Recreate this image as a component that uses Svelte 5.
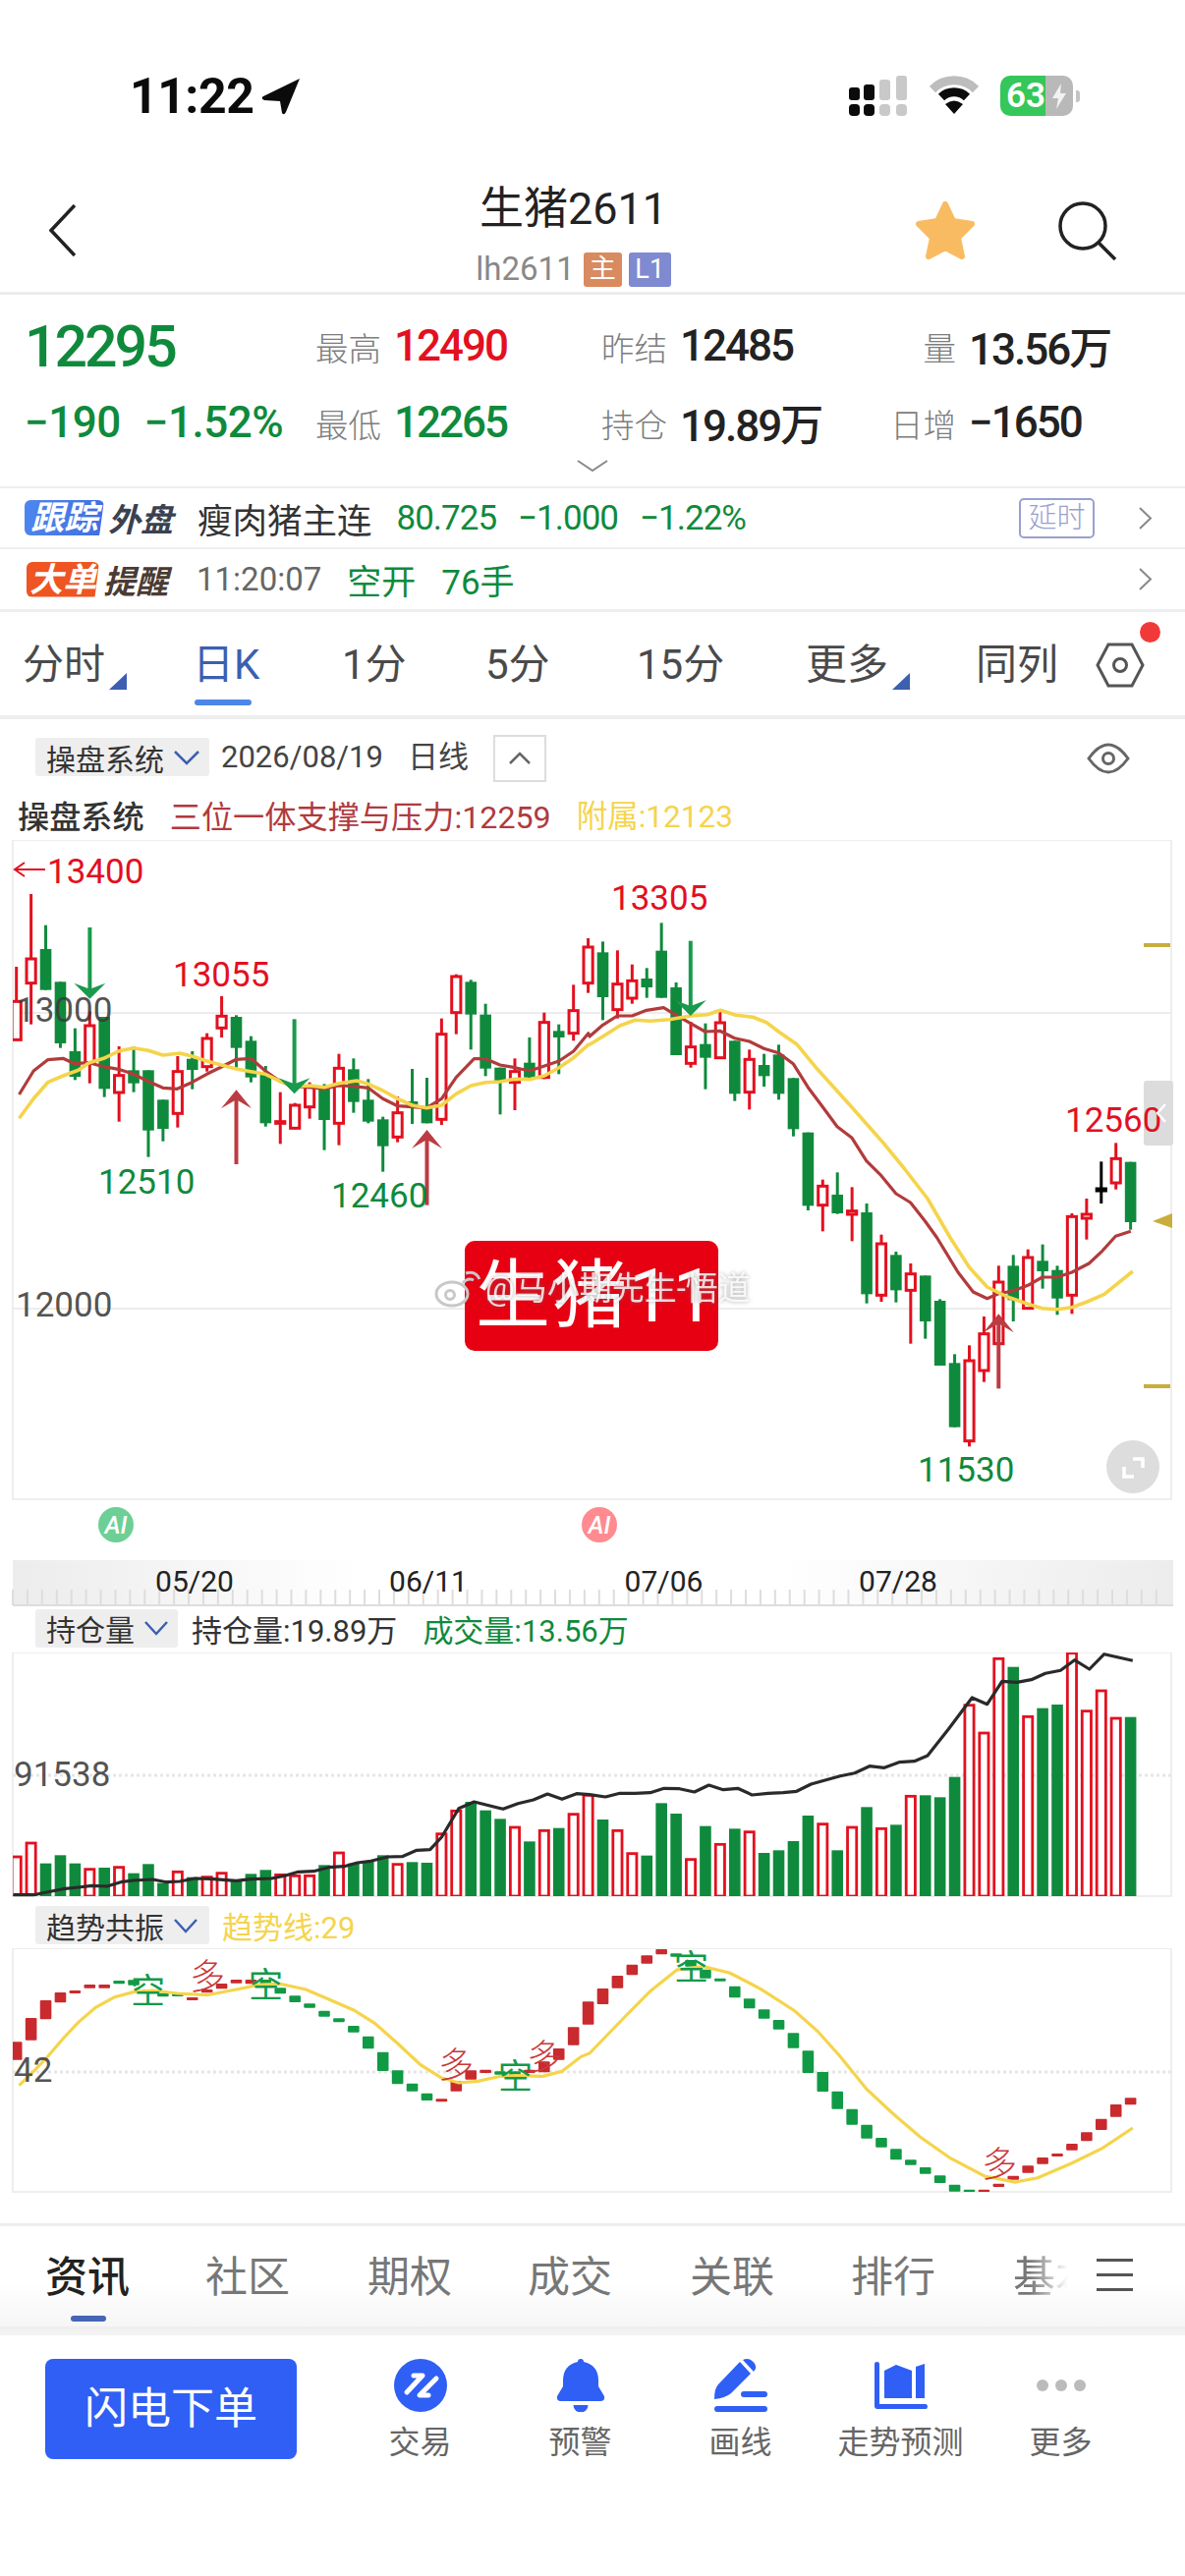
<script>
  // all chart numbers were read off the reference crops, so they stay in "crop" units here
  const X = (i) => 16.7 + 14.92 * i;
  const Y = (z) => 860 + z / 3;
  const Yv = (z) => 1630 + z / 3;
  const Yt = (z) => 1930 + z / 3;

  const candles = [
    [372,478,595,595,'r'],[150,348,422,548,'r'],[245,318,443,443,'g'],[418,418,606,620,'g'],
    [560,630,708,718,'g'],[508,552,665,728,'r'],[525,525,745,770,'g'],[615,704,756,845,'r'],
    [615,688,728,755,'g'],[688,688,872,953,'g'],[778,778,867,905,'g'],[645,692,820,863,'r'],
    [630,653,687,746,'g'],[575,591,677,692,'r'],[462,523,559,588,'r'],[520,525,620,680,'g'],
    [584,598,710,725,'g'],[675,702,850,860,'g'],[755,845,850,913,'r'],[788,795,865,868,'r'],
    [725,740,800,836,'r'],[730,745,840,932,'g'],[638,682,850,917,'r'],[652,685,785,818,'g'],
    [715,778,845,850,'g'],[830,838,920,998,'g'],[768,818,892,908,'r'],[684,783,800,852,'g'],
    [711,800,850,850,'g'],[530,578,838,855,'r'],[395,402,512,578,'r'],[412,418,518,625,'g'],
    [485,518,683,706,'g'],[680,680,722,823,'g'],[652,692,725,810,'r'],[588,665,710,715,'g'],
    [512,542,710,715,'r'],[548,568,588,700,'g'],[427,506,575,598,'r'],[285,312,422,452,'r'],
    [295,328,465,535,'g'],[322,425,503,530,'r'],[365,415,468,485,'r'],[376,408,435,467,'g'],
    [238,323,467,467,'g'],[420,435,642,642,'g'],[540,617,667,680,'r'],[545,608,650,746,'g'],
    [502,543,650,650,'r'],[598,598,760,782,'g'],[625,655,755,808,'r'],[638,672,706,738,'g'],
    [610,640,760,778,'g'],[712,712,868,890,'g'],[878,878,1102,1116,'g'],[1022,1042,1100,1180,'r'],
    [1000,1068,1125,1127,'g'],[1045,1118,1128,1210,'r'],[1095,1122,1372,1400,'g'],[1190,1218,1375,1395,'r'],
    [1242,1252,1360,1397,'g'],[1278,1310,1360,1523,'r'],[1315,1315,1455,1508,'g'],[1387,1392,1590,1590,'g'],
    [1555,1582,1778,1778,'g'],[1528,1575,1820,1837,'r'],[1440,1493,1605,1640,'r'],[1285,1335,1523,1523,'r'],
    [1252,1285,1390,1455,'g'],[1235,1260,1415,1415,'r'],[1220,1270,1302,1355,'g'],[1285,1298,1385,1435,'g'],
    [1125,1135,1375,1432,'r'],[1080,1128,1140,1205,'r'],[967,1050,1056,1095,'k'],[910,958,1032,1052,'r'],
    [968,968,1152,1175,'g']
  ];

  const vols = [
    [780,'r'],[738,'r'],[800,'g'],[775,'g'],[800,'g'],[818,'r'],[813,'g'],[812,'r'],[830,'g'],[802,'g'],
    [860,'g'],[826,'r'],[842,'g'],[842,'r'],[830,'r'],[855,'g'],[832,'g'],[820,'g'],[835,'r'],[838,'r'],
    [838,'r'],[805,'g'],[768,'r'],[800,'g'],[795,'g'],[775,'g'],[803,'r'],[796,'g'],[798,'g'],[710,'r'],
    [640,'r'],[612,'g'],[638,'g'],[664,'g'],[690,'r'],[733,'g'],[700,'r'],[692,'g'],[650,'r'],[592,'r'],
    [666,'g'],[700,'r'],[770,'r'],[776,'g'],[616,'g'],[648,'g'],[788,'r'],[686,'g'],[742,'r'],[694,'g'],
    [704,'r'],[768,'g'],[760,'g'],[732,'g'],[654,'g'],[680,'r'],[760,'g'],[690,'r'],[628,'g'],[694,'r'],
    [682,'g'],[595,'r'],[592,'g'],[598,'g'],[536,'g'],[317,'r'],[402,'r'],[175,'r'],[200,'g'],[352,'r'],
    [326,'g'],[315,'g'],[158,'r'],[335,'r'],[273,'r'],[357,'r'],[353,'g']
  ];

  const trend = [
    [445,500,'r'],[372,440,'r'],[318,376,'r'],[294,325,'r'],[288,297,'r'],[270,281,'r'],[270,281,'r'],[258,268,'g'],
    [256,272,'g'],[285,295,'g'],[296,307,'g'],[298,306,'g'],[309,318,'r'],[285,295,'r'],[267,283,'r'],[255,266,'r'],
    [255,268,'r'],[255,278,'g'],[280,298,'g'],[304,324,'g'],[328,341,'g'],[350,368,'g'],[373,385,'g'],[396,416,'g'],
    [428,466,'g'],[476,534,'g'],[532,574,'g'],[572,596,'g'],[602,624,'g'],[619,628,'r'],[565,596,'r'],[532,560,'r'],
    [530,540,'r'],[535,545,'g'],[535,550,'g'],[530,540,'r'],[505,538,'r'],[465,500,'r'],[400,455,'r'],[322,392,'r'],
    [282,330,'r'],[243,281,'r'],[209,241,'r'],[181,206,'r'],[162,178,'r'],[175,185,'g'],[195,215,'g'],[224,251,'g'],
    [251,260,'g'],[275,310,'g'],[313,343,'g'],[346,374,'g'],[378,407,'g'],[418,464,'g'],[472,540,'g'],[537,597,'g'],
    [596,650,'g'],[650,698,'g'],[698,740,'g'],[738,767,'g'],[772,805,'g'],[805,821,'g'],[828,848,'g'],[853,876,'g'],
    [881,902,'g'],[896,903,'g'],[896,903,'r'],[878,888,'r'],[854,866,'r'],[823,845,'r'],[798,818,'r'],[786,795,'r'],
    [756,776,'r'],[721,748,'r'],[680,714,'r'],[636,674,'r'],[616,637,'r']
  ];

  const left = (a) => a.map(([x, y]) => [x / 2.57, y]);
  const right = (a) => a.map(([x, y]) => [600 + x / 2.587, y]);
  const path = (pts, fy) => pts.map(([x, y]) => `${x.toFixed(1)},${fy(y).toFixed(1)}`).join(' ');

  const maRed = path([
    ...left([[50,762],[88,690],[125,656],[165,652],[195,668],[233,665],[271,677],[310,685],[349,700],[388,722],[426,742],[464,745],[502,725],[541,700],[579,678],[618,655],[656,652],[694,690],[733,722],[771,738],[810,740],[848,745],[886,735],[925,737],[963,742],[1001,775],[1040,797],[1078,800],[1116,803],[1155,775],[1193,710],[1240,653],[1270,653],[1308,672],[1347,680],[1385,690],[1424,675],[1462,660],[1500,630],[1539,575]]),
    ...right([[0,585],[35,550],[73,522],[112,522],[150,505],[195,497],[228,520],[266,545],[304,570],[343,568],[382,590],[421,600],[459,622],[498,635],[536,668],[575,740],[614,800],[652,860],[691,895],[729,965],[768,1010],[807,1065],[845,1092],[884,1150],[915,1200],[970,1305],[1010,1365],[1047,1385],[1077,1370],[1115,1362],[1154,1345],[1192,1320],[1231,1320],[1270,1305],[1315,1278],[1350,1240],[1385,1195],[1425,1180]])
  ], Y);

  const maYellow = path([
    ...left([[50,835],[88,775],[125,725],[165,705],[205,688],[233,665],[271,652],[310,630],[349,620],[388,628],[426,642],[470,636],[502,645],[541,660],[579,672],[618,684],[656,692],[694,700],[733,722],[771,738],[810,735],[848,740],[886,728],[933,720],[963,730],[1001,750],[1040,775],[1078,795],[1116,803],[1155,795],[1193,760],[1232,735],[1270,725],[1308,723],[1347,715],[1385,716],[1424,705],[1462,680],[1500,650],[1539,610]]),
    ...right([[0,610],[35,585],[80,552],[120,535],[160,538],[210,533],[266,522],[310,518],[345,505],[385,520],[430,526],[466,542],[500,572],[545,608],[600,685],[690,800],[770,905],[830,990],[890,1080],[950,1200],[1000,1290],[1047,1350],[1100,1380],[1150,1400],[1192,1415],[1232,1418],[1270,1412],[1310,1395],[1355,1372],[1430,1302]])
  ], Y);

  const oiLine = path([
    ...left([[35,896],[88,896],[125,887],[165,878],[205,873],[240,868],[280,870],[320,856],[349,852],[400,849],[435,857],[470,855],[510,846],[550,847],[618,853],[656,848],[710,846],[745,838],[780,826],[820,824],[860,812],[900,809],[935,798],[970,793],[1015,780],[1052,779],[1090,760],[1125,758],[1155,720],[1200,632],[1240,612],[1316,634],[1355,617],[1395,606],[1432,588],[1470,604],[1508,587]]),
    ...right([[0,590],[42,597],[80,586],[120,586],[160,584],[196,571],[237,572],[276,582],[314,561],[352,575],[390,571],[428,591],[470,586],[510,584],[545,580],[583,558],[620,546],[660,533],[698,524],[737,503],[776,508],[815,491],[855,488],[890,471],[945,390],[1007,294],[1047,314],[1086,244],[1125,247],[1163,239],[1200,220],[1240,211],[1277,179],[1316,207],[1355,161],[1430,181]])
  ], Yv);

  const trendLine = path([
    ...left([[50,578],[88,535],[125,490],[165,435],[205,385],[250,340],[300,308],[349,293],[400,288],[464,297],[541,302],[618,285],[680,270],[733,268],[800,285],[860,315],[925,348],[980,388],[1040,450],[1100,515],[1155,555],[1200,570],[1250,565],[1310,550],[1350,548],[1420,550],[1470,535],[1520,490]]),
    ...right([[0,480],[50,420],[100,360],[160,290],[230,225],[300,215],[370,235],[450,283],[540,350],[600,412],[660,490],[730,590],[800,665],[870,735],[950,800],[1040,855],[1120,873],[1180,860],[1270,815],[1350,770],[1430,708]])
  ], Yt);

  const upArrows = [
    [240.5, Y(748), Y(975)],
    [434.5, Y(870), Y(1100)],
    [1016.3, Y(1432), Y(1660)]
  ];
  const downArrows = [
    [91.4, Y(252), Y(470)],
    [299.6, Y(532), Y(760)],
    [702.8, Y(293), Y(522)]
  ];

  const upHead = (x, t) => `${x},${t} ${x + 15.5},${t + 19} ${x},${t + 10} ${x - 15.5},${t + 19}`;
  const downHead = (x, t) => `${x},${t} ${x + 16},${t - 16} ${x},${t - 10} ${x - 16},${t - 16}`;

  const tickXs = Array.from({ length: 79 }, (_, i) => 13 + 14.92 * i);

  const periods = ['分时', '日K', '1分', '5分', '15分', '更多', '同列'];
  const infoTabs = ['资讯', '社区', '期权', '成交', '关联', '排行'];
  const actions = ['交易', '预警', '画线', '走势预测', '更多'];
  const dates = [['05/20', 198], ['06/11', 436], ['07/06', 675.5], ['07/28', 914]];
</script>

<div class="page">
  <div class="status">
    <div class="clock">
      <span>11:22</span>
      <svg width="40" height="38" viewBox="0 0 40 38">
        <path class="black" d="M39 1 L2 19 Q-1 21 3 23 L19 24 L21 36 Q23 39 25 35 Z" />
      </svg>
    </div>
    <div class="status-right">
      <svg width="60" height="42" viewBox="0 0 60 42">
        <rect class="black" x="0" y="12" width="11" height="13" rx="3" />
        <rect class="black" x="15" y="9" width="11" height="16" rx="3" />
        <rect class="dim" x="31" y="4" width="11" height="21" rx="3" />
        <rect class="dim" x="48" y="0" width="11" height="25" rx="3" />
        <rect class="black" x="0" y="29" width="11" height="12" rx="4" />
        <rect class="black" x="15" y="29" width="11" height="12" rx="4" />
        <rect class="dim" x="31" y="29" width="11" height="12" rx="4" />
        <rect class="dim" x="48" y="29" width="11" height="12" rx="4" />
      </svg>
      <svg width="50" height="40" viewBox="0 0 50 40">
        <path class="wifi-out" d="M3 14 A31 31 0 0 1 47 14" />
        <path class="wifi-in" d="M12 22 A19 19 0 0 1 38 22" />
        <path class="black" d="M25 39 L16 29 Q25 22 34 29 Z" />
      </svg>
      <div class="battery">
        <span class="bat-fill">63</span>
        <span class="bat-rest">
          <svg width="18" height="28" viewBox="0 0 18 28"><path class="bolt" d="M11 1 L2 16 H8 L6 27 L16 11 H10 Z" /></svg>
        </span>
        <span class="bat-nub"></span>
      </div>
    </div>
  </div>

  <div class="nav">
    <svg class="back" width="27" height="53" viewBox="0 0 27 53"><path d="M26 1 L2 26.5 L26 52" /></svg>
    <div class="title-block">
      <div class="title">生猪2611</div>
      <div class="sub">
        <span class="code">lh2611</span>
        <span class="tag tag-main">主</span>
        <span class="tag tag-l1">L1</span>
      </div>
    </div>
    <svg class="star" width="62" height="60" viewBox="0 0 62 60">
      <path d="M31 3 L39 20 L58 23 L44 37 L48 56 L31 47 L14 56 L18 37 L4 23 L23 20 Z" />
    </svg>
    <svg class="search" width="60" height="60" viewBox="0 0 60 60">
      <circle cx="25" cy="25" r="23" />
      <path d="M41 42 L58 59" />
    </svg>
  </div>

  <div class="quote">
    <div class="q-row">
      <div class="cell"><span class="price down">12295</span></div>
      <div class="cell"><span class="lbl">最高</span><span class="val up">12490</span></div>
      <div class="cell"><span class="lbl">昨结</span><span class="val">12485</span></div>
      <div class="cell last"><span class="lbl">量</span><span class="val">13.56万</span></div>
    </div>
    <div class="q-row">
      <div class="cell wide"><span class="val down">−190</span><span class="val down">−1.52%</span></div>
      <div class="cell"><span class="lbl">最低</span><span class="val down">12265</span></div>
      <div class="cell"><span class="lbl">持仓</span><span class="val">19.89万</span></div>
      <div class="cell last"><span class="lbl">日增</span><span class="val">−1650</span></div>
    </div>
    <svg class="more-down" width="32" height="12" viewBox="0 0 32 12"><path d="M1 1 L16 11 L31 1" /></svg>
  </div>

  <div class="strip">
    <span class="badge badge-blue">跟踪</span><span class="badge-word">外盘</span>
    <span class="name">瘦肉猪主连</span>
    <span class="num down">80.725</span>
    <span class="num down">−1.000</span>
    <span class="num down">−1.22%</span>
    <span class="delay">延时</span>
    <svg class="go" width="15" height="23" viewBox="0 0 15 23"><path d="M2 1 L13 11.5 L2 22" /></svg>
  </div>
  <div class="strip strip-2">
    <span class="badge badge-orange">大单</span><span class="badge-word brown">提醒</span>
    <span class="time">11:20:07</span>
    <span class="num2 down">空开</span>
    <span class="num2 down">76手</span>
    <svg class="go" width="15" height="23" viewBox="0 0 15 23"><path d="M2 1 L13 11.5 L2 22" /></svg>
  </div>

  <div class="periods">
    {#each periods as p, i}
      <div class="period" class:active={i === 1}>
        {p}
        {#if i === 0 || i === 5}<span class="corner"></span>{/if}
      </div>
    {/each}
    <div class="gear">
      <svg width="50" height="46" viewBox="0 0 50 46">
        <path d="M13 2 H37 L48 23 L37 44 H13 L2 23 Z" />
        <circle cx="25" cy="23" r="6.5" />
      </svg>
      <span class="dot"></span>
    </div>
  </div>

  <div class="ind-bar">
    <div class="picker">操盘系统<svg width="28" height="16" viewBox="0 0 28 16"><path d="M2 2 L14 14 L26 2" /></svg></div>
    <span class="date">2026/08/19</span>
    <span class="date day">日线</span>
    <div class="collapse"><svg width="24" height="14" viewBox="0 0 24 14"><path d="M2 12 L12 2 L22 12" /></svg></div>
    <svg class="eye" width="44" height="32" viewBox="0 0 44 32">
      <path d="M2 16 Q22 -12 42 16 Q22 44 2 16 Z" />
      <circle cx="22" cy="16" r="5.5" />
    </svg>
  </div>
  <div class="legend">
    <span class="ink">操盘系统</span>
    <span class="ma-red">三位一体支撑与压力:12259</span>
    <span class="ma-yellow">附属:12123</span>
  </div>

  <svg class="chart" width="1206" height="782" viewBox="0 855 1206 782">
    <defs>
      <clipPath id="mainClip"><rect x="13" y="855" width="1179" height="671" /></clipPath>
      <clipPath id="volClip"><rect x="13" y="1682" width="1179" height="248" /></clipPath>
      <clipPath id="trendClip"><rect x="13" y="1983" width="1179" height="248" /></clipPath>
      <linearGradient id="axisFill" x1="0" x2="1" y1="0" y2="0">
        <stop offset="0" stop-color="#ececec" />
        <stop offset="0.3" stop-color="#ffffff" />
        <stop offset="0.66" stop-color="#ffffff" />
        <stop offset="1" stop-color="#ececec" />
      </linearGradient>
    </defs>

    <rect class="frame" x="13" y="855" width="1179" height="671" />
    <line class="grid" x1="13" x2="1192" y1="1031" y2="1031" />
    <line class="grid" x1="13" x2="1192" y1="1332" y2="1332" />

    <g clip-path="url(#mainClip)">
      {#each candles as [hi, top, bot, lo, t], i}
        <line class="wick {t}" x1={X(i)} x2={X(i)} y1={Y(hi)} y2={Y(lo)} />
        {#if t === 'g'}
          <rect class="solid" x={X(i) - 5.8} y={Y(top)} width="11.6" height={(bot - top) / 3} />
        {:else}
          <rect class="hollow {t}" x={X(i) - 4.6} y={Y(top)} width="9.2" height={(bot - top) / 3} />
        {/if}
      {/each}
    </g>

    <polyline class="ma red-line" points={maRed} />
    <polyline class="ma yellow-line" points={maYellow} />

    {#each downArrows as [x, tail, tip]}
      <line class="arrow-g" x1={x} x2={x} y1={tail} y2={tip - 4} />
      <polygon class="head-g" points={downHead(x, tip)} />
    {/each}
    {#each upArrows as [x, tip, tail]}
      <line class="arrow-r" x1={x} x2={x} y1={tip + 4} y2={tail} />
      <polygon class="head-r" points={upHead(x, tip)} />
    {/each}

    <rect class="side-tab" x="1164" y="1100" width="30" height="66" rx="3" />

    <path class="mark-arrow" d="M46 885 H15 M25 878 L15 885 L25 892" />
    <text class="px up-t" x="48" y="899">13400</text>
    <text class="px up-t" x="176" y="1004">13055</text>
    <text class="px up-t" x="622" y="926">13305</text>
    <text class="px up-t" x="1084" y="1152">12560</text>
    <text class="px down-t" x="100" y="1215">12510</text>
    <text class="px down-t" x="337" y="1229">12460</text>
    <text class="px down-t" x="934" y="1508">11530</text>
    <text class="px axis-t" x="16" y="1040">13000</text>
    <text class="px axis-t" x="16" y="1340">12000</text>

    <rect class="gold" x="1164" y="960" width="27" height="4" />
    <rect class="gold" x="1164" y="1409" width="27" height="4" />
    <polygon class="gold" points="1173,1243 1193,1235 1193,1250" />

    <path class="side-chev" d="M1186 1124 L1178 1133 L1186 1142" />

    <rect class="stamp" x="473" y="1263" width="258" height="112" rx="10" />
    <text class="stamp-t" x="484" y="1345">生猪11</text>

    <g class="weibo">
      <ellipse cx="460" cy="1317" rx="16" ry="12" />
      <circle cx="458" cy="1318" r="4.5" />
      <path d="M471 1306 Q476 1300 482 1303 M474 1296 Q484 1293 488 1302" />
    </g>
    <text class="mark" x="494" y="1323">@马小期先生-悟道</text>

    <circle class="round-btn" cx="1153" cy="1493" r="27" />
    <path class="round-icon" d="M1153 1485 H1163 V1494 M1144 1493 V1503 H1154" />

    <circle class="ai-g" cx="118" cy="1552" r="18" />
    <text class="ai-t" x="118" y="1561">AI</text>
    <circle class="ai-r" cx="610" cy="1552" r="18" />
    <text class="ai-t" x="610" y="1561">AI</text>

    <rect x="13" y="1588" width="1181" height="47" fill="url(#axisFill)" />
    {#each tickXs as x}
      <line class="tick" x1={x} x2={x} y1="1618" y2="1634" />
    {/each}
    <line class="tick" x1="13" x2="1194" y1="1634" y2="1634" />
    {#each dates as [d, x]}
      <text class="date-t" {x} y="1620">{d}</text>
    {/each}
  </svg>

  <div class="sub-bar">
    <div class="picker small">持仓量<svg width="26" height="16" viewBox="0 0 26 16"><path d="M2 2 L13 14 L24 2" /></svg></div>
    <span class="sub-ink">持仓量:19.89万</span>
    <span class="sub-green">成交量:13.56万</span>
  </div>

  <svg class="chart" width="1206" height="250" viewBox="0 1682 1206 250">
    <rect class="frame" x="13" y="1682" width="1179" height="248" />
    <line class="dots" x1="13" x2="1192" y1="1807" y2="1807" />
    <g clip-path="url(#volClip)">
      {#each vols as [top, t], i}
        {#if t === 'g'}
          <rect class="solid" x={X(i) - 5.8} y={Yv(top)} width="11.6" height={(900 - top) / 3} />
        {:else}
          <rect class="vol-hollow" x={X(i) - 4.6} y={Yv(top)} width="9.2" height={(900 - top) / 3} />
        {/if}
      {/each}
    </g>
    <polyline class="oi" points={oiLine} />
    <text class="px axis-t" x="14" y="1818">91538</text>
  </svg>

  <div class="sub-bar trend-bar">
    <div class="picker wide">趋势共振<svg width="26" height="16" viewBox="0 0 26 16"><path d="M2 2 L13 14 L24 2" /></svg></div>
    <span class="sub-yellow">趋势线:29</span>
  </div>

  <svg class="chart" width="1206" height="250" viewBox="0 1983 1206 250">
    <rect class="frame" x="13" y="1983" width="1179" height="248" />
    <line class="dots" x1="13" x2="1192" y1="2109" y2="2109" />
    <g clip-path="url(#trendClip)">
      {#each trend as [top, bot, t], i}
        <rect class={t === 'g' ? 'tb-g' : 'tb-r'} x={X(i) - 5.8} y={Yt(top)} width="11.6" height={(bot - top) / 3} rx="1" />
      {/each}
    </g>
    <polyline class="trend-line" points={trendLine} />
    <text class="sig-g" x="133" y="2039">空</text>
    <text class="sig-g" x="253" y="2033">空</text>
    <text class="sig-g" x="507" y="2126">空</text>
    <text class="sig-g" x="686" y="2015">空</text>
    <text class="sig-r" x="193" y="2025">多</text>
    <text class="sig-r" x="446" y="2115">多</text>
    <text class="sig-r" x="536" y="2107">多</text>
    <text class="sig-r" x="999" y="2216">多</text>
    <text class="px axis-t" x="14" y="2119">42</text>
  </svg>

  <div class="info-tabs">
    {#each infoTabs as t, i}
      <div class="info-tab" class:on={i === 0}>{t}</div>
    {/each}
    <div class="info-tab fade">基本</div>
    <div class="burger"><i></i><i></i><i></i></div>
  </div>
  <div class="info-shadow"></div>

  <div class="bottom">
    <div class="order">闪电下单</div>
    <div class="actions">
      {#each actions as a, i}
        <div class="action">
          <svg width="54" height="54" viewBox="0 0 54 54">
            {#if i === 0}
              <ellipse class="blue" cx="27" cy="27" rx="27" ry="27" />
              <path class="z" d="M20 17 H29 L13 34 M43 20 L26 37 H35" />
            {:else if i === 1}
              <path class="blue" d="M27 0 a3 3 0 0 1 3 3 C40 5 45 12 45 22 V28 L51 38 Q52 43 47 43 H7 Q2 43 3 38 L9 28 V22 C9 12 14 5 24 3 a3 3 0 0 1 3 -3 Z" />
              <path class="blue" d="M19.5 47 H34.5 A7.5 7.5 0 0 1 19.5 47 Z" />
            {:else if i === 2}
              <path class="blue" d="M0 41 Q0 30 4 26 L26 3 L37 15 L17 35 Q11 40 0 41 Z" />
              <path class="blue" d="M29 1 Q33 -1 37 1 Q43 5 42 10 L40 13 Z" />
              <rect class="blue" x="27" y="33" width="27" height="6" rx="3" />
              <rect class="blue" x="0" y="48" width="54" height="6" rx="3" />
            {:else if i === 3}
              <path class="blue" d="M0 5 Q0 3 2.5 3 Q5 3 5 5 V46 H52 Q54 46 54 48.5 Q54 51 52 51 H3 Q0 51 0 48 Z" />
              <path class="blue" d="M10 12 L22 6 L38 12 V40 H10 Z" />
              <path class="blue" d="M42 8 L51 5 V40 H42 Z" />
            {:else}
              <circle class="grey" cx="8" cy="27" r="6" />
              <circle class="grey" cx="27" cy="27" r="6" />
              <circle class="grey" cx="46" cy="27" r="6" />
            {/if}
          </svg>
          <span>{a}</span>
        </div>
      {/each}
    </div>
  </div>
</div>

<style>
  :global(body) {
    margin: 0;
    background: #fff;
  }

  .page {
    width: 1206px;
    height: 2622px;
    overflow: hidden;
    background: #fff;
    font-family: Roboto, 'Noto Sans CJK SC', sans-serif;
    color: #222;
  }

  svg { display: block; }
  .chart text { font-family: Roboto, 'Noto Sans CJK SC', sans-serif; }

  /* status bar */
  .status {
    height: 130px;
    box-sizing: border-box;
    padding: 77px 114px 0 132px;
    display: flex;
    justify-content: space-between;
    align-items: flex-start;
  }
  .clock {
    display: flex;
    align-items: center;
    gap: 8px;
    font-size: 50px;
    line-height: 42px;
    font-weight: 700;
    letter-spacing: -0.5px;
    color: #0b0b0b;
  }
  .status-right {
    display: flex;
    align-items: flex-start;
    gap: 22px;
  }
  .black { fill: #0b0b0b; }
  .dim { fill: #c9c9c9; }
  .wifi-out, .wifi-in { fill: none; stroke-width: 9px; }
  .wifi-out { stroke: #bdbdbd; }
  .wifi-in { stroke: #0b0b0b; }
  .battery {
    position: relative;
    display: flex;
    width: 74px;
    height: 41px;
    border-radius: 10px;
    overflow: visible;
  }
  .bat-fill {
    width: 46px;
    background: #35c759;
    border-radius: 10px 0 0 10px;
    color: #fff;
    font-size: 35px;
    line-height: 41px;
    font-weight: 600;
    text-align: right;
  }
  .bat-rest {
    flex: 1;
    display: flex;
    align-items: center;
    justify-content: center;
    background: #b9b9b9;
    border-radius: 0 10px 10px 0;
  }
  .bolt { fill: #f2f2f2; }
  .bat-nub {
    position: absolute;
    right: -7px;
    top: 15px;
    width: 4px;
    height: 12px;
    border-radius: 0 3px 3px 0;
    background: #c4c4c4;
  }

  /* nav */
  .nav {
    height: 170px;
    box-sizing: border-box;
    border-bottom: 3px solid #ececec;
    display: flex;
    align-items: flex-start;
  }
  .back {
    margin: 78px 0 0 50px;
  }
  .back path, .search path, .search circle {
    fill: none;
    stroke: #222;
    stroke-width: 3.5px;
  }
  .title-block {
    margin: 56px 0 0 408px;
    width: 197px;
    display: flex;
    flex-direction: column;
    align-items: center;
  }
  .title {
    font-size: 45px;
    line-height: 54px;
    color: #222;
    white-space: nowrap;
  }
  .sub {
    margin-top: 16px;
    display: flex;
    align-items: center;
    gap: 7px;
    white-space: nowrap;
  }
  .code {
    font-size: 33px;
    line-height: 36px;
    color: #888;
    margin-right: 2px;
  }
  .tag {
    display: block;
    height: 35px;
    line-height: 35px;
    border-radius: 3px;
    color: #fff;
    font-size: 27px;
    text-align: center;
  }
  .tag-main { width: 39px; background: #d98a5f; }
  .tag-l1 { width: 43px; background: #7f8ad0; }
  .star {
    margin: 75px 0 0 249px;
  }
  .star path {
    fill: #f9bb62;
    stroke: #f9bb62;
    stroke-width: 6px;
    stroke-linejoin: round;
  }
  .search { margin: 75px 0 0 84px; }

  /* quote block */
  .quote {
    height: 197px;
    box-sizing: border-box;
    padding-top: 13px;
    border-bottom: 2px solid #eee;
  }
  .q-row {
    height: 78px;
    padding-left: 25px;
    display: grid;
    grid-template-columns: 296px 291px 268px 1fr;
    align-items: center;
  }
  .cell {
    display: flex;
    align-items: center;
    gap: 13px;
    white-space: nowrap;
  }
  .wide { gap: 24px; }
  .wide .val {
    font-size: 44px;
    letter-spacing: -0.5px;
  }
  .lbl {
    font-size: 33.5px;
    color: #7d7d7d;
    font-weight: 300;
  }
  .last .lbl {
    width: 93px;
    text-align: right;
  }
  .val {
    font-size: 44px;
    letter-spacing: -2px;
    font-weight: 500;
    color: #222;
  }
  .price {
    font-size: 59px;
    letter-spacing: -3px;
    font-weight: 500;
  }
  .up { color: #e3101f; }
  .val.down, .price.down, .down { color: #0f8a3c; }
  .val.up { color: #e3101f; }
  .more-down {
    margin: -1px auto 0;
  }
  .more-down path, .go path {
    fill: none;
    stroke: #888;
    stroke-width: 2px;
  }

  /* strips */
  .strip {
    height: 62px;
    box-sizing: border-box;
    border-bottom: 2px solid #eee;
    padding: 0 33px 0 25px;
    display: flex;
    align-items: center;
    white-space: nowrap;
  }
  .strip-2 {
    height: 64px;
    padding-left: 27px;
    border-bottom-width: 3px;
  }
  .badge {
    display: block;
    height: 36px;
    line-height: 36px;
    width: 81px;
    font-size: 34px;
    font-weight: 700;
    font-style: italic;
    text-align: center;
    color: #fff;
    border-radius: 6px;
    clip-path: polygon(0 0, 100% 0, 94% 100%, 0 100%);
  }
  .badge-blue { background: linear-gradient(100deg, #4f86ee, #3f6fe0); }
  .badge-orange { width: 74px; background: #ee5522; }
  .badge-word {
    margin-left: 4px;
    font-size: 33px;
    font-weight: 700;
    font-style: italic;
    color: #3a4150;
  }
  .badge-word.brown { color: #4b3b33; }
  .name {
    margin-left: 25px;
    font-size: 35.5px;
    color: #333;
  }
  .num {
    margin-left: 22px;
    font-size: 35px;
    letter-spacing: -1px;
  }
  .name + .num { margin-left: 25px; }
  .delay {
    margin-left: auto;
    width: 77px;
    height: 41px;
    box-sizing: border-box;
    border: 2px solid #9aa0d0;
    border-radius: 5px;
    color: #9aa0d0;
    font-size: 29px;
    line-height: 37px;
    text-align: center;
    font-weight: 300;
  }
  .go { margin-left: 44px; }
  .strip-2 .go { margin-left: auto; }
  .time {
    margin-left: 29px;
    font-size: 33px;
    color: #666;
  }
  .num2 {
    margin-left: 26px;
    font-size: 35px;
  }

  /* period tabs */
  .periods {
    height: 109px;
    box-sizing: border-box;
    border-bottom: 4px solid #eee;
    padding: 3px 0 0 23px;
    display: grid;
    grid-template-columns: 173px 152px 146px 154px 172px 173px 122px 60px;
    align-items: center;
  }
  .period {
    position: relative;
    font-size: 42px;
    line-height: 50px;
    color: #4a4a4a;
    white-space: nowrap;
    width: max-content;
  }
  .period.active { color: #3c5fb0; }
  .period.active::after {
    content: '';
    position: absolute;
    left: 2px;
    right: 8px;
    bottom: -16px;
    height: 6px;
    border-radius: 3px;
    background: #4c86e8;
  }
  .corner {
    position: absolute;
    right: -22px;
    bottom: 0;
    width: 18px;
    height: 17px;
    background: #3c5fb0;
    clip-path: polygon(100% 0, 100% 100%, 0 100%);
  }
  .gear { position: relative; }
  .gear path, .gear circle {
    fill: none;
    stroke: #555;
    stroke-width: 3px;
  }
  .dot {
    position: absolute;
    left: 45px;
    top: -21px;
    width: 21px;
    height: 21px;
    border-radius: 50%;
    background: #f03a3a;
  }

  /* indicator bars */
  .ind-bar {
    height: 68px;
    padding: 16px 56px 0 36px;
    box-sizing: border-box;
    display: flex;
    align-items: flex-start;
    white-space: nowrap;
  }
  .picker {
    width: 177px;
    height: 39px;
    box-sizing: border-box;
    padding-left: 11px;
    margin-top: 3px;
    display: flex;
    align-items: center;
    gap: 9px;
    background: #eee;
    border-radius: 3px;
    font-size: 30px;
    color: #333;
  }
  .picker path, .collapse path {
    fill: none;
    stroke: #3c5fb0;
    stroke-width: 2.5px;
  }
  .picker.small { width: 145px; }
  .picker.wide { width: 177px; }
  .date {
    margin: 2px 0 0 12px;
    font-size: 31px;
    line-height: 42px;
    color: #444;
  }
  .date.day { margin-left: 25px; }
  .collapse {
    margin-left: 25px;
    width: 54px;
    height: 48px;
    box-sizing: border-box;
    border: 2px solid #ddd;
    display: flex;
    align-items: center;
    justify-content: center;
  }
  .collapse path { stroke: #666; }
  .eye {
    margin: 8px 0 0 auto;
  }
  .eye path, .eye circle {
    fill: none;
    stroke: #666;
    stroke-width: 3px;
  }
  .legend {
    height: 55px;
    padding: 12px 0 0 18px;
    box-sizing: border-box;
    display: flex;
    gap: 26px;
    font-size: 32.2px;
    line-height: 40px;
    white-space: nowrap;
  }
  .ink { color: #333; font-weight: 500; }
  .ma-red { color: #b03a3e; }
  .ma-yellow { color: #f5d44b; font-size: 31.5px; }

  /* main chart */
  .frame { fill: none; stroke: #eee; stroke-width: 2px; }
  .grid { stroke: #ededed; stroke-width: 2px; }
  .wick { stroke-width: 3px; }
  .wick.r, .hollow.r { stroke: #e3101f; }
  .wick.g { stroke: #0f8a3c; }
  .wick.k, .hollow.k { stroke: #000; }
  .solid { fill: #0f8a3c; }
  .hollow { fill: #fff; stroke-width: 3px; }
  .ma { fill: none; stroke-width: 3.2px; stroke-linejoin: round; }
  .red-line { stroke: #b23b3b; }
  .yellow-line { stroke: #f5d44b; stroke-width: 3.6px; }
  .arrow-g { stroke: #1a9a4c; stroke-width: 4px; }
  .head-g { fill: #1a9a4c; }
  .arrow-r { stroke: #bd3b42; stroke-width: 4px; }
  .head-r { fill: #bd3b42; }
  .px { font-size: 35px; }
  .up-t { fill: #e3101f; }
  .down-t { fill: #0f8a3c; }
  .axis-t { fill: rgba(60, 60, 60, 0.9); }
  .mark-arrow { fill: none; stroke: #e3101f; stroke-width: 2px; }
  .gold { fill: #c9ad3d; }
  .side-tab { fill: #dcdcdc; }
  .side-chev { fill: none; stroke: #fff; stroke-width: 2.5px; }
  .stamp { fill: #e60012; }
  .stamp-t {
    font-size: 76px;
    fill: #fff;
    letter-spacing: 2px;
  }
  .weibo ellipse, .weibo circle, .weibo path {
    fill: none;
    stroke: #c8c8c8;
    stroke-width: 3px;
  }
  .mark {
    font-size: 33px;
    fill: rgba(255, 255, 255, 0.82);
    filter: drop-shadow(0 0 2px rgba(110, 110, 110, 0.75));
  }
  .round-btn { fill: #dddddd; }
  .round-icon { fill: none; stroke: #fff; stroke-width: 3.5px; }
  .ai-g { fill: #6dcf95; }
  .ai-r { fill: #ff8a90; }
  .ai-t {
    font-size: 25px;
    fill: #fff;
    font-style: italic;
    font-weight: 500;
    text-anchor: middle;
  }
  .tick { stroke: #ddd; stroke-width: 2px; }
  .date-t {
    font-size: 30px;
    fill: #222;
    text-anchor: middle;
  }

  /* sub panels */
  .sub-bar {
    height: 45px;
    padding: 0 0 5px 36px;
    box-sizing: border-box;
    display: flex;
    align-items: center;
    font-size: 31px;
    white-space: nowrap;
  }
  .trend-bar { height: 51px; padding: 4px 0 0 36px; }
  .sub-bar .picker { margin-top: 0; }
  .sub-ink { margin-left: 14px; color: #333; }
  .sub-green { margin-left: 26px; color: #0f8a3c; }
  .sub-yellow { margin-left: 13px; color: #f5d44b; }
  .dots {
    stroke: #e6e6e6;
    stroke-width: 3px;
    stroke-dasharray: 3 3;
  }
  .vol-hollow { fill: #fff; stroke: #e3101f; stroke-width: 2.8px; }
  .oi { fill: none; stroke: #2a2a2a; stroke-width: 3.2px; stroke-linejoin: round; }
  .tb-g { fill: #119a45; }
  .tb-r { fill: #c92a2e; }
  .trend-line { fill: none; stroke: #f5d44b; stroke-width: 3.2px; }
  .sig-g { font-size: 35px; fill: #149a4a; }
  .sig-r { font-size: 36px; fill: #c8393a; font-weight: 300; }

  /* info tabs */
  .info-tabs {
    margin-top: 30px;
    height: 105px;
    box-sizing: border-box;
    border-top: 3px solid #eee;
    padding-left: 46px;
    background: linear-gradient(#fff 55%, #f6f6f7);
    display: grid;
    grid-template-columns: 163px 165px 163px 165px 164px 165px 85px 37px;
    align-items: start;
    padding-top: 26px;
  }
  .info-tab {
    position: relative;
    font-size: 43px;
    line-height: 52px;
    color: #777;
    white-space: nowrap;
  }
  .info-tab.on {
    color: #222;
    font-weight: 500;
  }
  .info-tab.on::after {
    content: '';
    position: absolute;
    left: 26px;
    bottom: -19px;
    width: 36px;
    height: 6px;
    border-radius: 3px;
    background: #4565b5;
  }
  .fade {
    width: 56px;
    overflow: hidden;
    -webkit-mask-image: linear-gradient(to right, #000 30%, transparent);
    mask-image: linear-gradient(to right, #000 30%, transparent);
  }
  .burger {
    padding-top: 7px;
    display: flex;
    flex-direction: column;
    gap: 12px;
  }
  .burger i {
    display: block;
    height: 3px;
    background: #555;
  }
  .info-shadow {
    height: 9px;
    background: linear-gradient(#eeeeee, #f4f4f5);
  }

  /* bottom bar */
  .bottom {
    padding: 24px 0 0 46px;
    display: flex;
    align-items: flex-start;
  }
  .order {
    width: 256px;
    height: 102px;
    border-radius: 8px;
    background: #2f5ff5;
    color: #fff;
    font-size: 44px;
    line-height: 102px;
    text-align: center;
  }
  .actions {
    margin-left: 44px;
    display: grid;
    grid-template-columns: repeat(5, 163px);
  }
  .action {
    display: flex;
    flex-direction: column;
    align-items: center;
    font-size: 32px;
    line-height: 32px;
    color: #666;
    gap: 15px;
    white-space: nowrap;
  }
  .blue { fill: #2f5ff5; }
  .grey { fill: #bbb; }
  .z {
    fill: none;
    stroke: #fff;
    stroke-width: 5px;
    stroke-linecap: round;
    stroke-linejoin: round;
  }
</style>
